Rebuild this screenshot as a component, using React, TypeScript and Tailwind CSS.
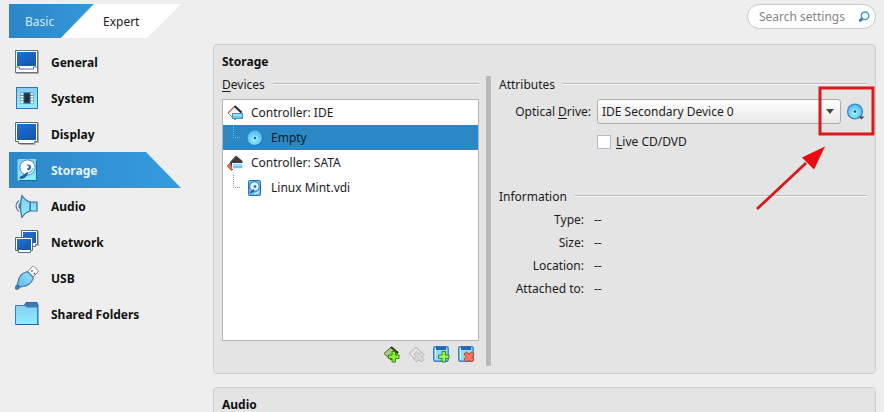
import React from "react";

function Gradients() {
  return (
    <svg className="absolute h-0 w-0" aria-hidden="true">
      <defs>
        <linearGradient id="screen" x1="0" y1="0" x2="0.6" y2="1">
          <stop offset="0" stopColor="#1b72dc" />
          <stop offset="1" stopColor="#1757ae" />
        </linearGradient>
        <linearGradient id="aqua" x1="0" y1="0" x2="0" y2="1">
          <stop offset="0" stopColor="#84cdf5" />
          <stop offset="1" stopColor="#8ff0ff" />
        </linearGradient>
        <linearGradient id="plug" x1="1" y1="0" x2="0" y2="1">
          <stop offset="0" stopColor="#92e8fd" />
          <stop offset="1" stopColor="#58aee8" />
        </linearGradient>
        <radialGradient id="disc" cx="0.45" cy="0.65" r="0.6">
          <stop offset="0" stopColor="#94f0ff" />
          <stop offset="1" stopColor="#55bcf2" />
        </radialGradient>
      </defs>
    </svg>
  );
}

function Icon({ size, children }: { size: number; children: React.ReactNode }) {
  return (
    <svg width={size} height={size} viewBox={`0 0 ${size} ${size}`} className="shrink-0" aria-hidden="true">
      {children}
    </svg>
  );
}

const GeneralIcon = () => (
  <Icon size={24}>
    <rect x="0.5" y="0.5" width="22" height="22" fill="#fff" stroke="#6b7480" />
    <rect x="2" y="2" width="19" height="14" fill="url(#screen)" />
    <path d="M1 17h3.500v2h14v-2H22" fill="none" stroke="#5b7186" />
    <path d="M23.500 1v22.500H1" fill="none" stroke="#b5a8a4" />
  </Icon>
);

const SystemIcon = () => (
  <Icon size={24}>
    <rect x="1.500" y="1.500" width="21" height="21" fill="url(#aqua)" stroke="#2f76ab" />
    <rect x="5" y="6.500" width="14" height="11" fill="#5d93b0" />
    <path d="M5.500 8h13M5.500 10.700h13M5.500 13.400h13M5.500 16.100h13" stroke="#fff" strokeWidth="1.600" />
    <rect x="9" y="7" width="6" height="10" fill="#1b3445" stroke="#36576b" />
  </Icon>
);

const DisplayIcon = () => (
  <Icon size={24}>
    <path d="M0.500 0.500h22v19h-3v2h-16v-2h-3z" fill="#fff" stroke="#58697a" />
    <rect x="2" y="2" width="19" height="16" fill="url(#screen)" />
    <path d="M23.500 1v19.500h-3.500v2H5" fill="none" stroke="#b5aaa6" />
  </Icon>
);

const StorageIcon = () => (
  <Icon size={24}>
    <rect x="3" y="1.500" width="18.500" height="21" rx="1" fill="url(#aqua)" stroke="#8fd8fa" />
    <path d="M21.500 2.500v20H4" fill="none" stroke="#1669aa" />
    <circle cx="12.500" cy="9.500" r="7.600" fill="#fff" stroke="#4a86bb" />
    <path d="M13.500 14.500a5.500 5.500 0 0 0 4.500-4.500" fill="none" stroke="#7cc6ea" strokeWidth="1.500" />
    <path d="M12 6.500q4-.5 4 2.500 0 3-3 3.200l-1-1z" fill="#2469a8" />
    <circle cx="12.500" cy="9" r="1.400" fill="#e8f8ff" />
    <path d="M4.500 20.500c0-3 4-2.500 7.500-6.500l1.500 1c-2 3-4 6-7.500 6z" fill="#205f9f" />
  </Icon>
);

const AudioIcon = () => (
  <Icon size={24}>
    <path d="M4 6.500Q-2 12 4 17.500M5.500 9Q2.500 12 5.500 15" fill="none" stroke="#4a7ba8" strokeWidth="1.200" />
    <path d="M15 8h7v9h-7z" fill="url(#aqua)" stroke="#3a6f9d" strokeWidth="1.200" />
    <path d="M7 1.500q3 5 8 6.500v9q-5 1.500-8 6.500-3-11 0-22z" fill="url(#aqua)" stroke="#3a6f9d" strokeWidth="1.200" />
  </Icon>
);

const NetworkIcon = () => (
  <Icon size={24}>
    <path d="M6.500 0.500h16v14h-2v2h-12v-2h-2z" fill="#fff" stroke="#58697a" />
    <rect x="8" y="2" width="13" height="11" fill="url(#screen)" />
    <path d="M23.500 1v14.500h-2" fill="none" stroke="#b5aaa6" />
    <path d="M0.500 7.500h17v13h-2v2h-12v-2h-3z" fill="#fff" stroke="#58697a" />
    <rect x="2" y="9" width="14" height="11" fill="url(#screen)" />
  </Icon>
);

const UsbIcon = () => (
  <Icon size={24}>
    <path d="M12.500 6l5-5.500q1-.5 2 .500l3.500 3.500q.5 1 0 1.500l-5.500 5.500z" fill="#fff" stroke="#7c838a" />
    <path d="M16.500 4.500l1 1M19 7l1 1" stroke="#3d4349" strokeWidth="1.600" />
    <path d="M11 6q1.500-.5 2.500.5l4 4q1 1 .5 2.500-3 7-10.500 7.500l-2 .5-2.500 2q-2 .5-2.500-.5-.5-1 .500-2.500l1.500-2 .5-2.500q1.500-7.500 8-9.500z" fill="url(#plug)" stroke="#4b7599" strokeWidth="1.100" />
    <path d="M1 22q.5-2 2-4l2.500 2.500-2.500 2.500q-1.500.5-2-1z" fill="#2a7abc" />
  </Icon>
);

const FolderIcon = () => (
  <Icon size={24}>
    <path d="M9.500 3l1.500-2.500h11l1 2.500v19H9.500z" fill="#3b7ab4" stroke="#2b659c" />
    <path d="M0.500 3.500h9.500l2 1.500h10.500v17.500h-22z" fill="url(#aqua)" stroke="#3a7fb2" />
    <path d="M1 22.500h23" stroke="#1d649e" />
  </Icon>
);

const ControllerIcon = ({ dark }: { dark?: boolean }) => (
  <Icon size={16}>
    {dark ? (
      <>
        <path d="M0.500 11l3.500-4 4 5-3.500 3.500z" fill="#e06a4a" stroke="#a84c38" />
        <path d="M9 0.500l6.500 5.500v7H5L3 7z" fill="#3b3d42" />
      </>
    ) : (
      <>
        <path d="M8 1l7 7-7 7-7-7z" fill="#f8f6f5" stroke="#8f8582" />
        <path d="M7.500 1.500L1 8" stroke="#b06a5c" strokeWidth="1.300" />
        <path d="M7.500 1l7 6.500" stroke="#2a2a2c" strokeWidth="2.200" />
      </>
    )}
    <rect x="5.500" y="8.500" width="10" height="5" fill="#69c7f6" stroke={dark ? "#e6f6ff" : "#4d93c4"} />
    <path d="M6 10h9" stroke="#c8efff" />
  </Icon>
);

const DiscIcon = () => (
  <Icon size={16}>
    <circle cx="8.500" cy="8.500" r="7.200" fill="#176ba6" />
    <circle cx="7.800" cy="7.800" r="7.200" fill="url(#disc)" />
    <circle cx="8" cy="8" r="2.200" fill="#a5e6fb" />
    <circle cx="8" cy="8" r="1.200" fill="#17577f" />
  </Icon>
);

const DiskIcon = () => (
  <Icon size={16}>
    <rect x="1.500" y="0.500" width="12" height="15" rx="1" fill="#6dbdf2" stroke="#2a6cb8" />
    <circle cx="7.500" cy="6.500" r="4.800" fill="#d9f5ff" stroke="#2a6fb4" />
    <circle cx="8" cy="6.500" r="1.300" fill="#1b609f" />
    <path d="M3 13.500q.5-3 4.500-4.500 0 3.500-4.500 4.500z" fill="#1b579c" />
    <path d="M7.500 14q3-1 4.500-2.500" stroke="#c9f2ff" strokeWidth="1.400" fill="none" />
  </Icon>
);

const plus = "M9 5.500h3.500v3.500H16v3.500h-3.500V16H9v-3.500H5.500V9H9z";
const cross = "M6 8l2.500-2 2.500 2 2.500-2 2.500 2.500-2 2.500 2 2.500-2.500 2.500-2.500-2-2.500 2L6 13l2-2.500z";

const AddControllerIcon = () => (
  <Icon size={17}>
    <path d="M8 1l7 6-7 7-7-6.500z" fill="#a9c887" stroke="#4a6d2e" />
    <path d="M8 1l7 6" stroke="#2b3f1a" strokeWidth="2.200" />
    <path d={plus} fill="#8aef2d" stroke="#2f841b" />
  </Icon>
);

const RemoveControllerIcon = () => (
  <Icon size={17}>
    <path d="M8 1l6.500 6.500-6.500 6.500-7-6.500z" fill="#e3e3e3" stroke="#b0b0b0" />
    <path d={cross} fill="#d8d8d8" stroke="#b8b8b8" />
  </Icon>
);

const AttachIcon = ({ remove }: { remove?: boolean }) => (
  <Icon size={17}>
    <rect x="0.700" y="0.700" width="14.500" height="14.500" rx="1.500" fill="#92dbfa" stroke="#3a80c8" strokeWidth="1.400" />
    <path d="M3 0.500h10v3.500H3z" fill="#2466b4" />
    <path d="M2.500 2v11" stroke="#dafaff" />
    <path d={remove ? cross : plus} fill={remove ? "#ff7657" : "#99ef5a"} stroke={remove ? "#cc3f26" : "#2d8734"} />
  </Icon>
);

const navItems = [
  { label: "General", icon: <GeneralIcon /> },
  { label: "System", icon: <SystemIcon /> },
  { label: "Display", icon: <DisplayIcon /> },
  { label: "Storage", icon: <StorageIcon />, active: true },
  { label: "Audio", icon: <AudioIcon /> },
  { label: "Network", icon: <NetworkIcon /> },
  { label: "USB", icon: <UsbIcon /> },
  { label: "Shared Folders", icon: <FolderIcon /> },
];

const devices = [
  { label: "Controller: IDE", icon: <ControllerIcon /> },
  { label: "Empty", icon: <DiscIcon />, child: true, selected: true },
  { label: "Controller: SATA", icon: <ControllerIcon dark /> },
  { label: "Linux Mint.vdi", icon: <DiskIcon />, child: true },
];

const tools = [
  { label: "Add controller", icon: <AddControllerIcon /> },
  { label: "Remove controller", icon: <RemoveControllerIcon />, disabled: true },
  { label: "Add attachment", icon: <AttachIcon /> },
  { label: "Remove attachment", icon: <AttachIcon remove /> },
];

const details = ["Type:", "Size:", "Location:", "Attached to:"];

function GroupTitle({ children }: { children: React.ReactNode }) {
  return (
    <div className="flex h-5 items-center gap-2">
      <h3 className="pt-[2px]">{children}</h3>
      <div className="h-[2px] flex-1 border-t border-[#bcbcbc] bg-[#f6f6f6]" />
    </div>
  );
}

function TreeBranch({ selected }: { selected?: boolean }) {
  return (
    <svg width="8" height="25" className="ml-[10px] mr-[6px] shrink-0" aria-hidden="true">
      <path d="M0.500 0v12.500H8" fill="none" stroke={selected ? "#78b8e2" : "#8f8f8f"} strokeDasharray="1 1" />
    </svg>
  );
}

export default function App() {
  return (
    <div className="flex h-screen overflow-hidden bg-[#eeeeee] pl-[9px] pr-2 pt-1 font-['Noto_Sans',sans-serif] text-[12px] leading-5 text-[#1c1c1c]">
      <Gradients />
      <aside className="w-[172px] shrink-0">
        <div className="flex h-[34px]">
          <button className="w-[85px] bg-linear-to-r from-[#2b86c6] to-[#3498dc] pl-4 pt-[2px] text-left text-[#d3edff] [clip-path:polygon(0_0,100%_0,52px_100%,0_100%)]">
            Basic
          </button>
          <button className="-ml-[33px] flex-1 bg-white pl-[42px] pt-[2px] text-left [clip-path:polygon(33px_0,100%_0,86px_100%,0_100%)]">
            Expert
          </button>
        </div>
        <nav className="mt-[6px]">
          {navItems.map((item) => (
            <button
              key={item.label}
              className={
                item.active
                  ? "flex h-9 w-full items-center gap-3 bg-linear-to-r from-[#2e87c6] to-[#359ce2] pl-[6px] font-bold text-[#e6f5ff] [clip-path:polygon(0_0,137px_0,100%_100%,0_100%)]"
                  : "flex h-9 w-full items-center gap-3 pl-[6px] font-bold text-[#111111]"
              }
            >
              {item.icon}
              <span className="pt-[2px]">{item.label}</span>
            </button>
          ))}
        </nav>
      </aside>

      <main className="ml-8 min-w-0 flex-1">
        <div className="ml-auto flex h-[25px] w-[129px] items-center rounded-full border border-[#c9c9c9] bg-white pl-[11px] pr-[5px]">
          <input
            type="search"
            aria-label="Search settings"
            placeholder="Search settings"
            className="min-w-0 flex-1 bg-transparent outline-none placeholder:text-[#858585]"
          />
          <svg width="12" height="12" viewBox="0 0 12 12" className="shrink-0" aria-hidden="true">
            <circle cx="7" cy="4.800" r="3.800" fill="#f1faff" stroke="#4a98bf" strokeWidth="1.400" />
            <path d="M3.800 8L2.300 9.500" stroke="#3a83b0" strokeWidth="2.800" strokeLinecap="round" />
          </svg>
        </div>

        <section className="mt-[15px] rounded-[4px] border border-[#d0d0d0] bg-[#e4e4e4] px-2 pb-[7px] pt-[7px]">
          <h2 className="font-bold text-[#111111]">Storage</h2>
          <div className="mt-[2px] flex">
            <div className="w-[257px] shrink-0 pb-[3px]">
              <GroupTitle>
                <u className="underline-offset-2">D</u>evices
              </GroupTitle>
              <ul className="mt-[5px] h-[242px] border border-[#b4b4b4] bg-white">
                {devices.map((device) => (
                  <li key={device.label}>
                    <button
                      className={
                        device.selected
                          ? "flex h-[25px] w-full items-center bg-[#2b88c4] text-[#0b1a2b]"
                          : "flex h-[25px] w-full items-center"
                      }
                    >
                      {device.child ? <TreeBranch selected={device.selected} /> : <span className="w-1" />}
                      {device.icon}
                      <span className="ml-2">{device.label}</span>
                    </button>
                  </li>
                ))}
              </ul>
              <div className="mt-[5px] flex justify-end gap-2 pr-1">
                {tools.map((tool) => (
                  <button key={tool.label} aria-label={tool.label} disabled={tool.disabled}>
                    {tool.icon}
                  </button>
                ))}
              </div>
            </div>

            <div className="ml-[7px] mt-[2px] w-[5px] shrink-0 self-stretch bg-[#b9b9b9]" />

            <div className="ml-2 min-w-0 flex-1">
              <GroupTitle>Attributes</GroupTitle>
              <div className="relative mt-[5px] flex h-[25px] items-center">
                <label htmlFor="drive" className="w-[92px] shrink-0 text-right">
                  Optical <u className="underline-offset-2">D</u>rive:
                </label>
                <div className="relative ml-[6px] min-w-0 flex-1">
                  <select
                    id="drive"
                    className="block h-[25px] w-full appearance-none rounded-[3px] border border-[#adadad] bg-linear-to-b from-white to-[#e9e9e9] pl-1 pr-6"
                  >
                    <option>IDE Secondary Device 0</option>
                  </select>
                  <svg width="8" height="5" className="pointer-events-none absolute right-[7px] top-[10px]" aria-hidden="true">
                    <path d="M0 0h8L4 5z" fill="#4a4a4a" />
                  </svg>
                </div>
                <button aria-label="Choose optical disk" className="ml-[5px] mr-px shrink-0">
                  <svg width="20" height="18" viewBox="0 0 20 18" className="block" aria-hidden="true">
                    <circle cx="9" cy="8.500" r="7.400" fill="url(#disc)" stroke="#3f88bd" strokeWidth="1.400" />
                    <circle cx="9" cy="8.500" r="2.400" fill="#a5e6fb" />
                    <circle cx="9" cy="8.500" r="1.200" fill="#17577f" />
                    <path d="M12.500 13.500h6l-3 3z" fill="#454a52" />
                  </svg>
                </button>
                <svg
                  width="120"
                  height="126"
                  viewBox="0 0 120 126"
                  className="pointer-events-none absolute -right-2 -top-[13px]"
                  aria-hidden="true"
                >
                  <rect x="65" y="2" width="53" height="46" fill="none" stroke="#e0171b" strokeWidth="3" />
                  <path d="M2 123L51 77" stroke="#d9161a" strokeWidth="2.800" />
                  <path d="M70 60.500L47 71.500 59 83.500z" fill="#e90c10" />
                </svg>
              </div>
              <label className="ml-[98px] mt-2 flex w-fit items-center gap-[5px]">
                <input
                  type="checkbox"
                  className="h-[14px] w-[14px] appearance-none border border-[#b3bcc6] bg-white checked:bg-[#2b88c4]"
                />
                <span>
                  <u className="underline-offset-2">L</u>ive CD/DVD
                </span>
              </label>

              <div className="mt-[34px]">
                <GroupTitle>Information</GroupTitle>
                <dl className="mt-[2px]">
                  {details.map((label) => (
                    <div key={label} className="flex h-[23px] items-center gap-[10px]">
                      <dt className="w-[85px] text-right">{label}</dt>
                      <dd>--</dd>
                    </div>
                  ))}
                </dl>
              </div>
            </div>
          </div>
        </section>

        <section className="mt-[13px] h-24 rounded-[4px] border border-[#d0d0d0] bg-[#e4e4e4] px-2 pt-[7px]">
          <h2 className="font-bold text-[#111111]">Audio</h2>
        </section>
      </main>
    </div>
  );
}
